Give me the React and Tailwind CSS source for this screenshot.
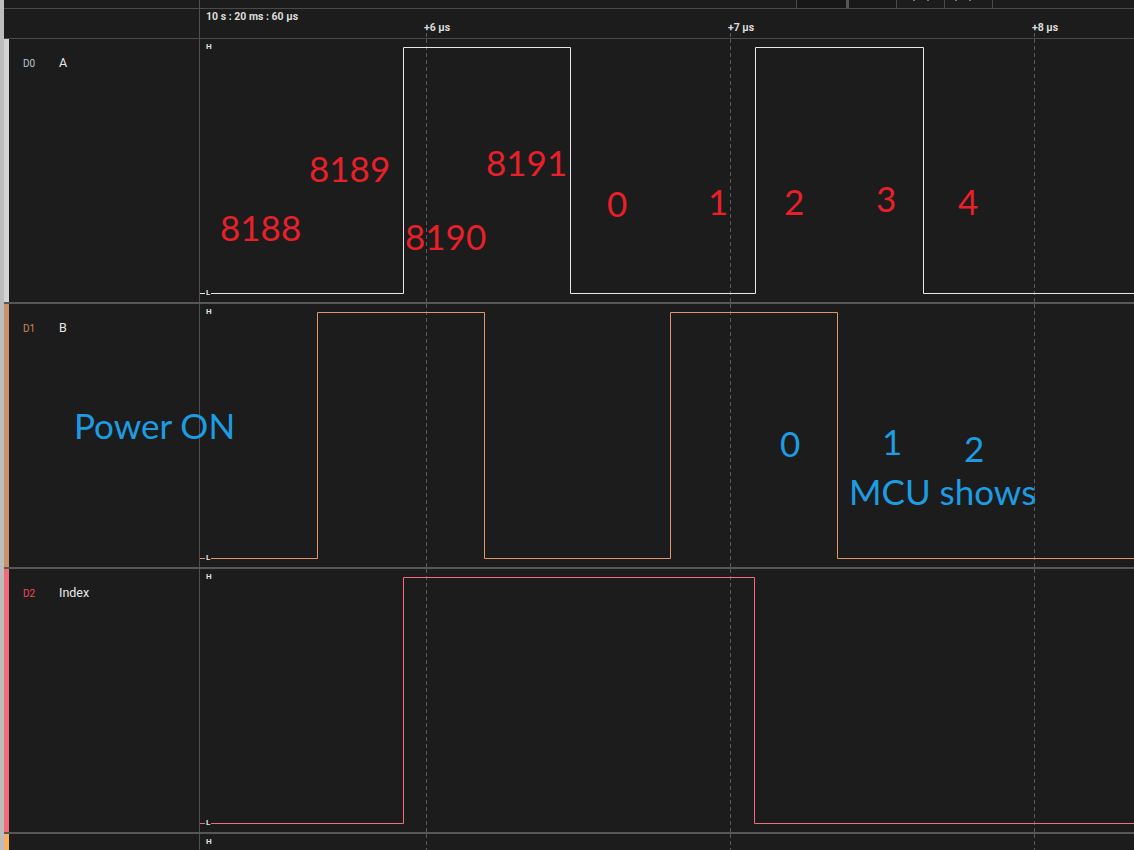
import React from 'react';

const channels = [
  {
    id: 'D0',
    name: 'A',
    strip: 'bg-[#d4d4d4]',
    tag: 'text-[#b9c6d2]',
    stroke: '#e6e6e6',
    path: 'M0 254.5 H203.5 V8.5 H370.5 V254.5 H555.5 V8.5 H723.5 V254.5 H934',
  },
  {
    id: 'D1',
    name: 'B',
    strip: 'bg-[#c8926c]',
    tag: 'text-[#c98660]',
    stroke: '#e0966a',
    path: 'M0 254.5 H117.5 V8.5 H284.5 V254.5 H470.5 V8.5 H637.5 V254.5 H934',
  },
  {
    id: 'D2',
    name: 'Index',
    strip: 'bg-[#f26d7a]',
    tag: 'text-[#f04b5c]',
    stroke: '#f06e7a',
    path: 'M0 254.5 H203.5 V8.5 H554.5 V254.5 H934',
  },
];

const gridX = [226.5, 530.5, 834.5];

// red / blue notes written on top of the capture
const notes = [
  { text: '8188', x: 220, y: 210, c: 'text-[#e8202a]' },
  { text: '8189', x: 309, y: 151, c: 'text-[#e8202a]' },
  { text: '8190', x: 405, y: 219, c: 'text-[#e8202a]' },
  { text: '8191', x: 486, y: 145, c: 'text-[#e8202a]' },
  { text: '0', x: 607, y: 186, c: 'text-[#e8202a]' },
  { text: '1', x: 708, y: 184, c: 'text-[#e8202a]' },
  { text: '2', x: 784, y: 184, c: 'text-[#e8202a]' },
  { text: '3', x: 876, y: 181, c: 'text-[#e8202a]' },
  { text: '4', x: 958, y: 184, c: 'text-[#e8202a]' },
  { text: 'Power ON', x: 74, y: 408, c: 'text-[#1d9ce2]' },
  { text: '0', x: 780, y: 426, c: 'text-[#1d9ce2]' },
  { text: '1', x: 882, y: 424, c: 'text-[#1d9ce2]' },
  { text: '2', x: 964, y: 431, c: 'text-[#1d9ce2]' },
  { text: 'MCU shows', x: 849, y: 474, c: 'text-[#1d9ce2]' },
];

const Grid = ({ h }) =>
  gridX.map((x) => (
    <line key={x} x1={x} y1={0} x2={x} y2={h} stroke="#5c5c5c" strokeWidth="1" strokeDasharray="4 3" />
  ));

const Level = ({ children, top }) => (
  <span className={`absolute left-[5px] ${top} bg-[#1c1c1c] px-[1px] text-[8px] font-bold leading-none text-[#e2e2e2]`}>
    {children}
  </span>
);

const ChannelRow = ({ ch }) => (
  <div className="flex h-[265px] border-b-2 border-[#575757]">
    <div className={`w-[5px] ${ch.strip}`} />
    <div className="w-[191px] border-r border-[#4f4f4f] pl-[14px] pt-[18px]">
      <div className="flex items-baseline leading-none">
        <span className={`w-[36px] text-[10px] ${ch.tag}`}>{ch.id}</span>
        <span className="text-[12.5px] text-[#e8e8e8]">{ch.name}</span>
      </div>
    </div>
    <div className="relative flex-1">
      <svg width="934" height="263" className="block">
        <Grid h={263} />
        <path d={ch.path} fill="none" stroke={ch.stroke} strokeWidth="1" />
      </svg>
      <Level top="top-[4px]">H</Level>
      <Level top="top-[250px]">L</Level>
    </div>
  </div>
);

export default function App() {
  return (
    <div className="relative flex h-[850px] w-[1134px] overflow-hidden bg-[#1c1c1c] font-['Roboto',sans-serif]">
      <div className="w-[4px] shrink-0 bg-[#bdbdbd]" />
      <div className="flex flex-1 flex-col">
        {/* toolbar strip */}
        <div className="flex h-[9px] shrink-0 border-b border-[#4a4a4a]">
          <div className="w-[196px] border-r border-[#4f4f4f]" />
          <div className="w-[596px]" />
          <div className="w-[50px] border-l border-[#4a4a4a] bg-[#171717]" />
          <div className="w-[3px] bg-[#555]" />
          <div className="w-[47px] bg-[#191919]" />
          <div className="relative w-[48px] border-l border-[#4a4a4a]">
            <span className="absolute left-[16px] top-0 h-[1px] w-[2px] bg-[#777]" />
            <span className="absolute left-[30px] top-0 h-[1px] w-[2px] bg-[#777]" />
          </div>
          <div className="relative w-[48px] border-l border-[#4a4a4a]">
            <span className="absolute left-[10px] top-0 h-[1px] w-[2px] bg-[#777]" />
            <span className="absolute left-[24px] top-0 h-[1px] w-[2px] bg-[#777]" />
          </div>
          <div className="flex-1 border-l border-[#4a4a4a]" />
        </div>

        {/* time ruler */}
        <div className="flex h-[30px] shrink-0 border-b border-[#4a4a4a]">
          <div className="w-[196px] border-r border-[#4f4f4f]" />
          <div className="relative flex-1">
            <span className="absolute left-[6px] top-[3px] text-[10.5px] font-bold leading-none text-[#dcdcdc]">
              10 s : 20 ms : 60 µs
            </span>
            {['+6 µs', '+7 µs', '+8 µs'].map((t, i) => (
              <span
                key={t}
                className="absolute top-[14px] text-[10.5px] font-bold leading-none text-[#dcdcdc]"
                style={{ left: 224 + i * 304 }}
              >
                {t}
              </span>
            ))}
            <svg width="934" height="29" className="block">
              {gridX.map((x) => (
                <line key={x} x1={x} y1={24} x2={x} y2={29} stroke="#5c5c5c" strokeWidth="1" strokeDasharray="4 3" />
              ))}
            </svg>
          </div>
        </div>

        {channels.map((ch) => (
          <ChannelRow key={ch.id} ch={ch} />
        ))}

        {/* D3, cut off at the bottom */}
        <div className="flex flex-1">
          <div className="w-[5px] bg-[#f5b35e]" />
          <div className="w-[191px] border-r border-[#4f4f4f]" />
          <div className="relative flex-1">
            <svg width="934" height="20" className="block">
              <Grid h={20} />
            </svg>
            <Level top="top-[4px]">H</Level>
          </div>
        </div>
      </div>

      {notes.map((n, i) => (
        <span
          key={i}
          className={`absolute whitespace-nowrap font-['Lato',sans-serif] text-[35px] leading-none ${n.c}`}
          style={{ left: n.x, top: n.y }}
        >
          {n.text}
        </span>
      ))}
    </div>
  );
}
